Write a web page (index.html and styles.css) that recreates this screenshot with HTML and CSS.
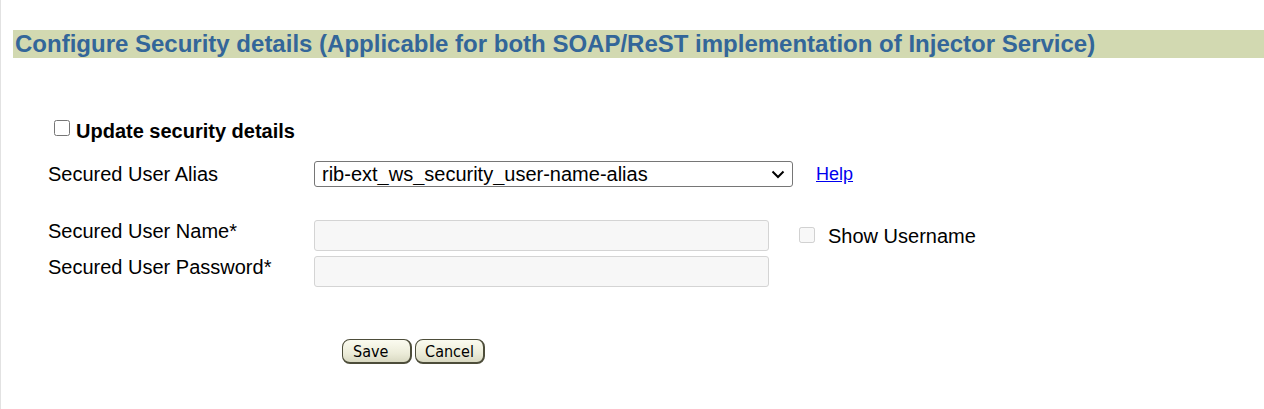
FILE: index.html
```html
<!DOCTYPE html>
<html lang="en">
<head>
  <meta charset="UTF-8">
  <title>Configure Security details</title>
  <link rel="stylesheet" href="styles.css">
</head>
<body>
  <div class="page">
    <!-- section header -->
    <h1 class="section-title">Configure Security details (Applicable for both SOAP/ReST implementation of Injector Service)</h1>

    <div class="update-row">
      <label><input type="checkbox" id="updateSecurity"> Update security details</label>
    </div>

    <!-- form rows -->
    <div class="form">
      <div class="form-row alias-row">
        <div class="field-label">Secured User Alias</div>
        <span class="select-wrap">
          <select id="alias">
            <option>rib-ext_ws_security_user-name-alias</option>
          </select>
          <svg class="chevron" width="14" height="9" viewBox="0 0 14 9"><path d="M1.5 1.5 L7 7 L12.5 1.5" fill="none" stroke="#000" stroke-width="2"/></svg>
        </span>
        <a href="#" class="help-link">Help</a>
      </div>

      <div class="form-row name-row">
        <div class="field-label">Secured User Name*</div>
        <input type="text" class="text-field" disabled>
        <label class="show-user"><input type="checkbox" disabled> Show Username</label>
      </div>

      <div class="form-row pass-row">
        <div class="field-label">Secured User Password*</div>
        <input type="password" class="text-field" disabled>
      </div>
    </div>

    <div class="buttons">
      <button class="oj-btn save-btn">Save</button><button class="oj-btn">Cancel</button>
    </div>
  </div>
</body>
</html>
```

FILE: styles.css
```css
html, body {
  margin: 0;
  padding: 0;
  background: #fff;
}
body {
  font-family: "Liberation Sans", Arial, sans-serif;
  border-left: 1px solid #e2e2e2;
  min-height: 409px;
  box-sizing: border-box;
}
.page {
  padding: 30px 0 0 12px;
}

/* header band */
.section-title {
  margin: 0;
  background: #d2d9b1;
  color: #336699;
  font-size: 24px;
  font-weight: bold;
  height: 28px;
  line-height: 28px;
  padding-left: 2px;
  white-space: nowrap;
  overflow: hidden;
}

.update-row {
  margin-top: 60px;
  padding-left: 41px;
  font-size: 20px;
  font-weight: bold;
  color: #000;
}
.update-row label {
  display: flex;
  align-items: center;
  gap: 6px;
  height: 26px;
}
.update-row input {
  width: 16px;
  height: 16px;
  margin: 0 0 6px 0;
}

/* form */
.form {
  padding-left: 35px;
  font-size: 20px;
  color: #000;
}
.form-row {
  display: flex;
}
.field-label {
  width: 266px;
  flex: none;
  line-height: 23px;
}
.alias-row {
  margin-top: 17px;
  align-items: center;
}
.select-wrap {
  position: relative;
  display: inline-block;
  height: 26px;
}
.select-wrap select {
  appearance: none;
  -webkit-appearance: none;
  width: 479px;
  height: 26px;
  font-family: "Liberation Sans", Arial, sans-serif;
  font-size: 20px;
  color: #000;
  background: #fff;
  border: 1px solid #767676;
  border-radius: 3px;
  padding: 0 30px 0 7px;
  margin: 0;
}
.chevron {
  position: absolute;
  right: 8px;
  top: 9px;
  pointer-events: none;
}
.help-link {
  color: #0000ee;
  font-size: 18px;
  margin-left: 23px;
}

.name-row {
  margin-top: 33px;
}
.pass-row {
  margin-top: 5px;
}
.text-field {
  width: 455px;
  height: 31px;
  box-sizing: border-box;
  background: #f7f7f7;
  border: 1px solid #d4d4d4;
  border-radius: 3px;
  margin: 0;
}
.show-user {
  display: flex;
  align-items: center;
  gap: 13px;
  height: 31px;
  padding-top: 2px;
  box-sizing: border-box;
  margin-left: 30px;
  color: #000;
}
.show-user input {
  width: 16px;
  height: 16px;
  margin: 0 0 3px 0;
}

/* old style buttons */
.buttons {
  margin-top: 52px;
  padding-left: 329px;
  display: flex;
  gap: 3px;
}
.oj-btn {
  width: 70px;
  height: 25px;
  padding: 0;
  font-family: "DejaVu Sans Condensed", "Liberation Sans Narrow", sans-serif;
  font-size: 16px;
  color: #000;
  background: linear-gradient(#fbfbf0, #ececd9 60%, #d9d9c2);
  border: 1px solid #4d4d3a;
  border-bottom-width: 2px;
  border-right-width: 2px;
  border-radius: 8px;
  cursor: pointer;
}
.save-btn {
  text-align: left;
  padding-left: 10px;
}
```
